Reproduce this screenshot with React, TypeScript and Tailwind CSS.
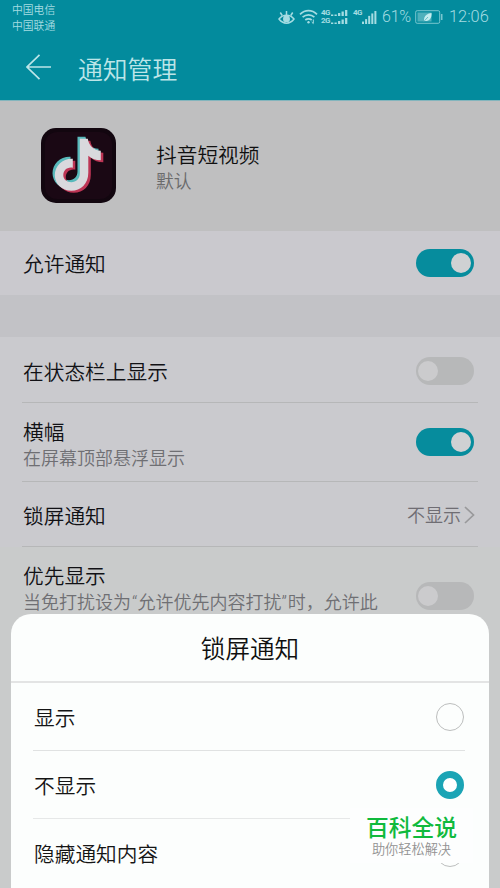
import React from "react";

function Toggle({ on = false }: { on?: boolean }) {
  return (
    <div
      className={`flex h-[28px] w-[58px] shrink-0 items-center rounded-full ${
        on ? "justify-end bg-[#068c9d] pr-[3px]" : "justify-start bg-[#b7b8b9] pl-[2px]"
      }`}
    >
      <div className={`h-[20px] w-[20px] rounded-full ${on ? "bg-[#cfd1d3]" : "bg-[#cbcbcd]"}`} />
    </div>
  );
}

function Label({ title, note }: { title: string; note?: React.ReactNode }) {
  return (
    <div className="flex flex-col whitespace-nowrap">
      <span className="text-[20.7px] leading-[26px] text-[#111115]">{title}</span>
      {note && <span className="text-[18px] leading-[26px] text-[#6f6f73]">{note}</span>}
    </div>
  );
}

function Signal({ className, bars }: { className: string; bars: number[] }) {
  return (
    <svg className={className} viewBox="0 0 15 16" preserveAspectRatio="none" fill="#a5dce2">
      {bars.map((h, i) => (
        <rect key={i} x={i * 3.1} y={16 - h} width="2" height={h} />
      ))}
    </svg>
  );
}

function StatusBar() {
  return (
    <div className="flex h-[36px] justify-between pl-[12px] pr-[11px] text-[#a5dce2]">
      <div className="flex flex-col pt-[2px] text-[10.8px] leading-[15.5px]">
        <span>中国电信</span>
        <span>中国联通</span>
      </div>
      <div className="flex h-[34px] items-center">
        <svg className="h-[16px] w-[17px]" viewBox="0 0 17 16" fill="none" stroke="#a5dce2" strokeWidth="1.5">
          <path d="M1 10C5 5 12 5 16 10C12 15.5 5 15.500 1 10Z" />
          <circle cx="8.5" cy="9.9" r="2.7" fill="#a5dce2" />
          <path d="M8.500 6V2M4.200 6.500L2.300 3.500M12.800 6.500L14.700 3.500" />
        </svg>
        <svg className="ml-[4px] h-[16px] w-[19px]" viewBox="0 0 19 16" fill="none" stroke="#a5dce2" strokeWidth="1.7">
          <path d="M1 5.3C6 .4 13 .4 18 5.3M3.6 8.2C7 5 12 5 15.4 8.2M6.3 11C8 9.5 11 9.5 12.7 11" />
          <circle cx="9.5" cy="13.2" r="1.2" fill="#a5dce2" stroke="none" />
          <path d="M14.3 10.5v4M12.7 13l1.6 1.6" strokeWidth="1" />
        </svg>
        <div className="ml-[3px] flex flex-col font-[Roboto,sans-serif] text-[8px] font-bold leading-[8px]">
          <div className="flex h-[8px] items-center">
            <span className="w-[10px] tracking-[-0.6px]">4G</span>
            <Signal className="h-[6px] w-[17px]" bars={[4, 4, 8, 12, 16]} />
          </div>
          <div className="flex h-[8px] items-center">
            <span className="w-[10px] tracking-[-0.6px]">2G</span>
            <Signal className="h-[6px] w-[17px]" bars={[4, 4, 8, 12, 16]} />
          </div>
        </div>
        <span className="ml-[5px] mt-[-9px] w-[9px] font-[Roboto,sans-serif] text-[8px] font-bold leading-[8px] tracking-[-0.6px]">4G</span>
        <Signal className="h-[13px] w-[15px]" bars={[3, 6, 10, 13, 16]} />
        <span className="ml-[5px] w-[33px] whitespace-nowrap font-[Roboto,sans-serif] text-[16px] leading-[16px] tracking-[-0.2px]">61%</span>
        <svg className="h-[14px] w-[28px]" viewBox="0 0 28 14" fill="none" stroke="#79c6cf">
          <rect x=".7" y=".7" width="24" height="12.6" rx="1.5" />
          <rect x="2.5" y="2.5" width="14" height="9" fill="#4fb0bc" stroke="none" />
          <path d="M26.7 4v6" strokeWidth="1.6" />
          <path d="M9 11C8.600 5 13 3.500 16.500 3C17 8 14.500 11.500 9 11Z" fill="#c5edf0" stroke="none" />
          <path d="M8.800 11.500L13 7" stroke="#4fb0bc" strokeWidth=".8" />
        </svg>
        <span className="ml-[6px] w-[40px] whitespace-nowrap font-[Roboto,sans-serif] text-[16.4px] leading-[16px]">12:06</span>
      </div>
    </div>
  );
}

const notePath = "M25 0H33C34 7 39 11.500 46 12V21.500C41 21.500 37 20 33.500 17V34C33.500 45 26 52 16.500 52C7 52 0 45 0 36.500C0 27 8 19.500 18 20V29C12 28 8.500 32 8.500 36.500C8.500 40.500 12 43.500 16.500 43.500C21.500 43.500 25 40 25 34.500Z";

function AppLogo() {
  return (
    <svg className="h-[75px] w-[75px] shrink-0" viewBox="0 0 75 75">
      <rect width="75" height="75" rx="15" fill="#12060f" />
      <rect x="4" y="4" width="67" height="67" rx="12" fill="#1a0814" />
      <g transform="translate(12.800 9.500)">
        <path d={notePath} fill="#58b9bb" transform="translate(-1.300 -.8)" />
        <path d={notePath} fill="#bd3555" transform="translate(3.500 3.200)" />
        <path d={notePath} fill="#d9d9dd" transform="translate(1 1.200)" />
      </g>
    </svg>
  );
}

function Radio({ checked = false }: { checked?: boolean }) {
  return (
    <div
      className={`h-[28px] w-[28px] rounded-full ${
        checked ? "border-[7px] border-[#1ba4b5] bg-white" : "border-[1.5px] border-[#bcbebe]"
      }`}
    />
  );
}

function Sheet() {
  return (
    <div className="absolute left-[11px] top-[614px] flex h-[274px] w-[478px] flex-col overflow-hidden rounded-t-[20px] bg-[#fcfefd]">
      <div className="flex h-[69px] shrink-0 items-center justify-center border-b-2 border-[#e3e4e4] text-[24.6px] text-[#101010]">
        锁屏通知
      </div>
      <div className="flex flex-col pl-[22px] pr-[24px] text-[20.7px] text-[#151515]">
        <div className="flex h-[68px] items-center justify-between border-b border-[#e0e2e2] pl-px">
          <span className="mt-[2px]">显示</span>
          <div className="mr-px"><Radio /></div>
        </div>
        <div className="flex h-[68px] items-center justify-between border-b border-[#e6e8e8] pl-px">
          <span className="mt-[2px]">不显示</span>
          <div className="mr-px"><Radio checked /></div>
        </div>
        <div className="flex h-[68px] items-center justify-between pl-px">
          <span className="mt-[2px]">隐藏通知内容</span>
          <div className="mr-px"><Radio /></div>
        </div>
      </div>
      <div className="absolute left-[339px] top-[194px] flex h-[55px] w-[123px] flex-col items-center bg-[#fdfefe] pt-[5px]">
        <span className="text-[22.8px] font-medium leading-[27px] text-[#10ba3d]">百科全说</span>
        <span className="text-[13.2px] leading-[18px] text-[#929292]">助你轻松解决</span>
      </div>
    </div>
  );
}

export default function App() {
  return (
    <div className="relative flex h-[888px] w-[500px] flex-col overflow-hidden bg-[#c9cbcb] font-['Noto_Sans_CJK_SC',sans-serif] font-[350]">
      <header className="h-[100px] shrink-0 bg-[#038b9d]">
        <StatusBar />
        <div className="flex h-[62px] items-center pl-[26px]">
          <svg className="h-[26px] w-[26px]" viewBox="0 0 26 26" fill="none" stroke="#bce5e8" strokeWidth="1.7">
            <path d="M25 13H1M13.500 .8L1 13L13.500 25.200" />
          </svg>
          <h1 className="ml-[26px] mt-[2px] text-[24.8px] leading-[30px] text-[#bce5e8]">通知管理</h1>
        </div>
      </header>
      <section className="flex h-[131px] shrink-0 items-center border-t border-[#83b5bd] bg-[#bfbfc0] pl-[41px]">
        <div className="mb-px"><AppLogo /></div>
        <div className="mb-[-6px] ml-[40px] flex h-[56px] flex-col">
          <span className="text-[20.7px] leading-[27px] text-[#101010]">抖音短视频</span>
          <span className="text-[17.8px] leading-[25px] text-[#6a6a6b]">默认</span>
        </div>
      </section>
      <section className="flex h-[64px] shrink-0 items-center justify-between bg-[#cac9ce] pl-[23px] pr-[26px]">
        <Label title="允许通知" />
        <Toggle on />
      </section>
      <div className="h-[42px] shrink-0 bg-[#c2c2c6]" />
      <section className="flex flex-col bg-[#cacace] px-[22px]">
        <div className="flex h-[66px] items-center justify-between border-b border-[#b6b7b8] pl-px pr-[4px] pt-[2px]">
          <Label title="在状态栏上显示" />
          <Toggle />
        </div>
        <div className="flex h-[79px] items-center justify-between border-b border-[#b6b7b8] pl-px pr-[4px]">
          <div className="mt-[3px]"><Label title="横幅" note="在屏幕顶部悬浮显示" /></div>
          <Toggle on />
        </div>
        <div className="flex h-[65px] items-center justify-between border-b border-[#b6b7b8] pl-px pr-[3px] pt-px">
          <Label title="锁屏通知" />
          <div className="flex items-center text-[18px] text-[#6f6d73]">
            不显示
            <svg className="ml-[3px] h-[18px] w-[11px]" viewBox="0 0 11 18" fill="none" stroke="#99999b" strokeWidth="1.700">
              <path d="M1 1L9.500 9L1 17" />
            </svg>
          </div>
        </div>
      </section>
      <section className="flex h-[82px] shrink-0 items-start justify-between pl-[23px] pr-[26px] pt-[15px]">
        <Label
          title="优先显示"
          note={
            <>
              当免打扰设为<span className="ml-px font-[Roboto,sans-serif]">“</span>允许优先内容打扰
              <span className="mr-px font-[Roboto,sans-serif]">”</span>时，允许此
            </>
          }
        />
        <div className="mt-[20px]"><Toggle /></div>
      </section>
      <Sheet />
    </div>
  );
}
